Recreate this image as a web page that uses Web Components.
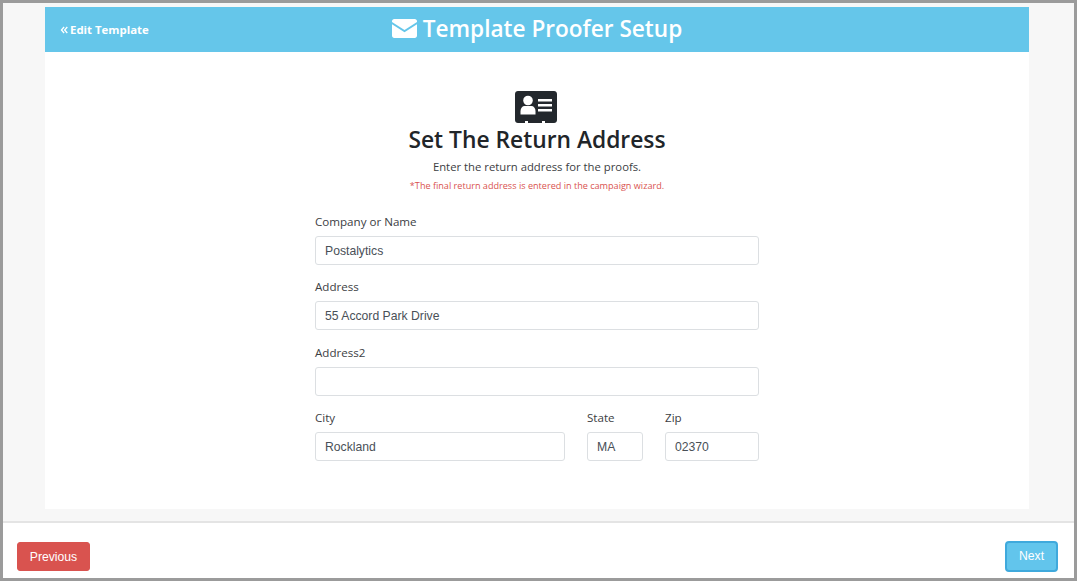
<!DOCTYPE html>
<html><head><meta charset="utf-8">
<style>
html,body{margin:0;padding:0;height:100%}
body{font-family:"Open Sans","Noto Sans",sans-serif}
</style></head><body>
<wizard-frame>
  <wizard-header slot="header" title-text="Template Proofer Setup" back-text="Edit Template"></wizard-header>
  <step-intro heading="Set The Return Address" lead="Enter the return address for the proofs." note="*The final return address is entered in the campaign wizard."></step-intro>
  <address-form></address-form>
  <wizard-button slot="left" kind="danger">Previous</wizard-button>
  <wizard-button slot="right" kind="info">Next</wizard-button>
</wizard-frame>
<script>
function def(name, html, setup){
  customElements.define(name, class extends HTMLElement{
    connectedCallback(){
      if(this.shadowRoot) return;
      const r=this.attachShadow({mode:'open'});
      r.innerHTML=html;
      if(setup) setup.call(this,r);
    }
  });
}
def('wizard-frame',`<style>
:host{display:flex;flex-direction:column;box-sizing:border-box;width:1077px;height:581px;border:3px solid #9b9b9b;background:#f7f7f7;overflow:hidden}
.main{flex:none;height:518px;padding:4px 45px 0 42px;box-sizing:border-box;display:flex;flex-direction:column}
.card{background:#fff;height:502px;display:flex;flex-direction:column}
.body{display:flex;flex-direction:column;align-items:center}
.foot{flex:1;background:#fff;border-top:2px solid #e4e4e4;display:flex;justify-content:space-between;align-items:flex-start;padding:19px 16px 0 14px}
</style>
<div class="main"><div class="card"><slot name="header"></slot><div class="body"><slot></slot></div></div></div>
<div class="foot"><slot name="left"></slot><slot name="right"></slot></div>`);

def('wizard-header',`<style>
:host{display:flex;flex:none;position:relative;height:45px;background:#65c6ea;color:#fff;align-items:center;justify-content:center}
.back{position:absolute;left:15px;top:15px;display:flex;align-items:center;gap:2px;font-size:11.4px;font-weight:700;line-height:16px}
.t{display:flex;align-items:center;gap:6px;font-size:22.6px;font-weight:600;line-height:32px;margin-top:-2px}
svg{display:block;fill:#fff}
</style>
<div class="back"><svg width="8" height="8" viewBox="0 0 8 8"><path d="M3.6 .6 L.6 4 L3.6 7.4 L4.6 6.6 L2.4 4 L4.6 1.4Z M6.8 .6 L3.8 4 L6.8 7.4 L7.8 6.6 L5.6 4 L7.8 1.4Z"/></svg><span id="b"></span></div>
<div class="t"><svg width="25" height="19" viewBox="0 0 25 19"><path d="M2.2 0H22.8C24 0 25 1 25 2.2V2.9L12.5 11 0 2.9V2.2C0 1 1 0 2.2 0Z"/><path d="M0 5.2L12.5 13.3 25 5.2V16.8C25 18 24 19 22.8 19H2.2C1 19 0 18 0 16.8Z"/></svg><span id="t"></span></div>`,
function(r){r.getElementById('b').textContent=this.getAttribute('back-text');r.getElementById('t').textContent=this.getAttribute('title-text');});

def('step-intro',`<style>
:host{display:flex;flex-direction:column;align-items:center;padding-top:39px;color:#212529}
svg{display:block;margin:0 2px 1px 0}
h1{margin:0;font-size:22.8px;line-height:32px;font-weight:600}
p{margin:0;font-size:11.3px;line-height:18px;margin-top:2px;color:#3c4043}
small{display:block;font-size:9.1px;line-height:14px;color:#d9534f;margin-top:3px}
</style>
<svg width="42" height="32" viewBox="0 0 42 32"><path fill="#23282d" d="M3 0H39C40.700 0 42 1.300 42 3V29C42 30.700 40.700 32 39 32H30V30H27V32H13V30H10V32H3C1.300 32 0 30.700 0 29V3C0 1.300 1.300 0 3 0Z"/><g fill="#fff"><circle cx="13" cy="9.500" r="4.800"/><path d="M5.500 20C5.500 17 7.500 15 9.500 15H16.500C18.500 15 20.500 17 20.500 20V23.500H5.500Z"/><rect x="23" y="8" width="14" height="2.500"/><rect x="23" y="13" width="14" height="2.500"/><rect x="23" y="18" width="14" height="2.500"/></g></svg>
<h1 id="h"></h1><p id="l"></p><small id="n"></small>`,
function(r){r.getElementById('h').textContent=this.getAttribute('heading');r.getElementById('l').textContent=this.getAttribute('lead');r.getElementById('n').textContent=this.getAttribute('note');});

def('text-field',`<style>
:host{display:flex;flex-direction:column;gap:6px;min-width:0}
.l{font-size:11.6px;line-height:16px;height:16px;color:#3c4043}
.i{box-sizing:border-box;height:29px;border:1px solid #dcdfe2;border-radius:3px;padding:0 9px;font:12.2px/28px "Liberation Sans",Arial,sans-serif;color:#495057;background:#fff}
</style><div class="l"></div><div class="i"></div>`,
function(r){r.querySelector('.l').textContent=this.getAttribute('label');r.querySelector('.i').textContent=this.getAttribute('value')||'';});

def('address-form',`<style>
:host{display:flex;flex-direction:column;gap:14.34px;width:444px;padding-top:21px}
.row{display:grid;grid-template-columns:250px 56px 94px;column-gap:22px}
</style>
<text-field label="Company or Name" value="Postalytics"></text-field>
<text-field label="Address" value="55 Accord Park Drive"></text-field>
<text-field label="Address2"></text-field>
<div class="row"><text-field label="City" value="Rockland"></text-field><text-field label="State" value="MA"></text-field><text-field label="Zip" value="02370"></text-field></div>`);

def('wizard-button',`<style>
:host{display:block;box-sizing:border-box;height:29px;border-radius:3px;font:12.2px/28px "Liberation Sans",Arial,sans-serif;color:#fff;text-align:center}
:host([kind=danger]){width:73px;background:#d9534f;border:1px solid #d9534f}
:host([kind=info]){width:53px;height:31px;line-height:27px;background:#62c5ec;border:2px solid #3fa9dc;border-radius:4px;margin-top:-1px}
</style><slot></slot>`);
</script>
</body></html>
